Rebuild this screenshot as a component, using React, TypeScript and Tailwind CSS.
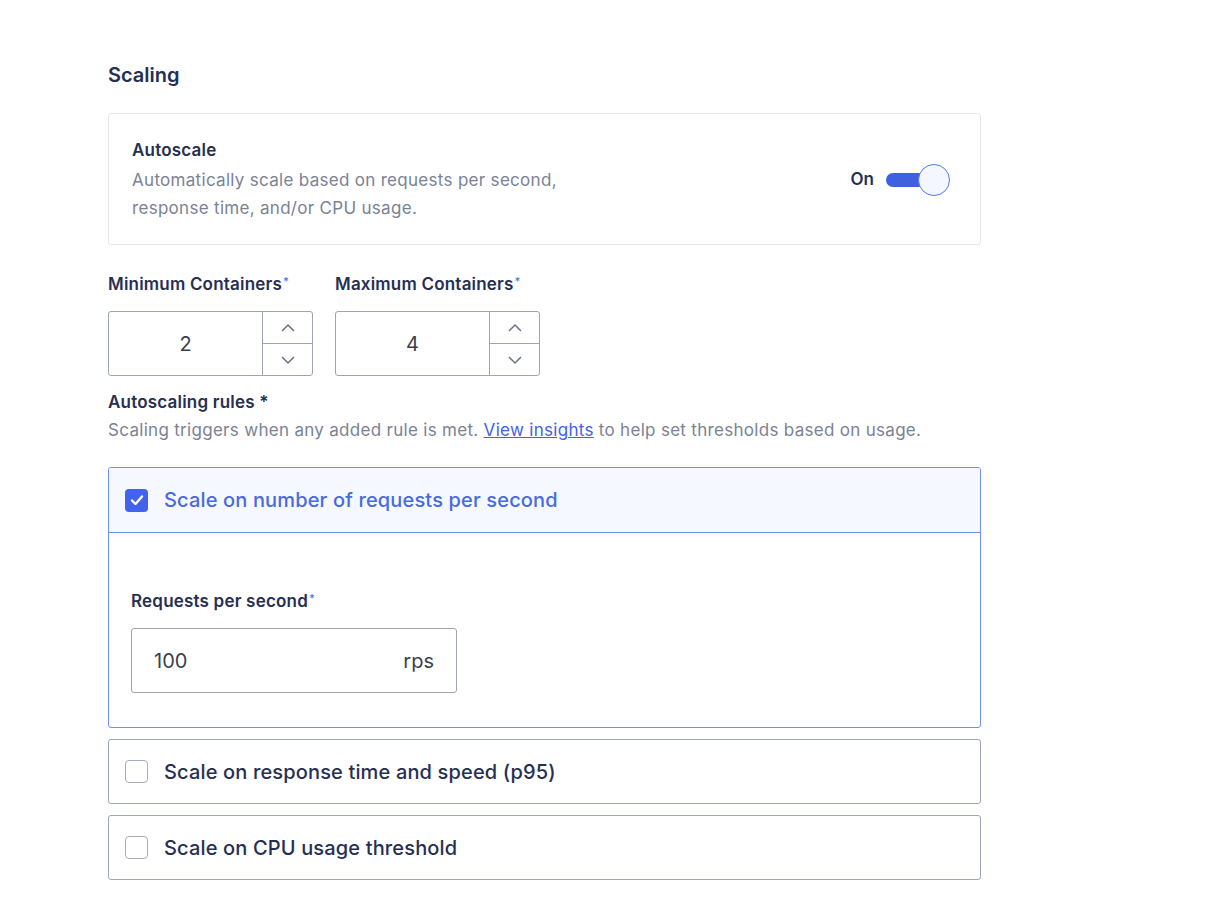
import React from "react";

const font = { fontFamily: "Inter, 'Open Sans', sans-serif" };

function Stepper({ value }: { value: string }) {
  return (
    <div className="flex h-[65px] w-[205px] rounded-[3px] border border-[#9ea4b3] bg-white">
      <div className="flex flex-1 items-center justify-center text-[20px] text-[#3a3f4c]">{value}</div>
      <div className="flex w-[50px] flex-col border-l border-[#9ea4b3]">
        <div className="flex flex-1 items-center justify-center border-b border-[#9ea4b3]">
          <svg width="16" height="10" viewBox="0 0 16 10" fill="none" stroke="#6b7283" strokeWidth="1.5">
            <path d="M2 8 L8 2 L14 8" />
          </svg>
        </div>
        <div className="flex flex-1 items-center justify-center">
          <svg width="16" height="10" viewBox="0 0 16 10" fill="none" stroke="#6b7283" strokeWidth="1.5">
            <path d="M2 2 L8 8 L14 2" />
          </svg>
        </div>
      </div>
    </div>
  );
}

function Star() {
  return <span className="relative -top-[5px] ml-[1px] text-[11px] text-[#5b7be8]">*</span>;
}

function Checkbox({ checked }: { checked?: boolean }) {
  if (checked) {
    return (
      <div className="flex h-[23px] w-[23px] items-center justify-center rounded-[4px] bg-[#4263eb]">
        <svg width="14" height="12" viewBox="0 0 14 12" fill="none" stroke="white" strokeWidth="2.4" strokeLinecap="round" strokeLinejoin="round">
          <path d="M2 6.5 L5.5 10 L12 2.5" />
        </svg>
      </div>
    );
  }
  return <div className="h-[23px] w-[23px] rounded-[4px] border-[1.5px] border-[#a7adba] bg-white" />;
}

const label = "text-[17px] font-semibold leading-[22px] tracking-[0.2px] text-[#262f52]";
const body = "text-[17px] tracking-[0.3px] text-[#7a8296]";
const rule = "text-[20px] font-medium tracking-[0.15px]";

export default function App() {
  return (
    <div className="min-h-[922px] bg-white" style={font}>
      <div className="ml-[108px] w-[873px] pt-[62px]">
        <div className="text-[20px] font-semibold leading-[26px] text-[#262f52]">Scaling</div>

        <div className="mt-[25px] flex h-[132px] items-center justify-between rounded-[3px] border border-[#e4e7ee] pl-[23px] pr-[30px] pt-[2px]">
          <div>
            <div className={label}>Autoscale</div>
            <div className={`mt-[5px] leading-[28px] ${body}`}>
              Automatically scale based on requests per second,
              <br />
              response time, and/or CPU usage.
            </div>
          </div>
          <div className="flex items-center gap-[12px]">
            <span className="text-[17px] font-semibold text-[#262f52]">On</span>
            <div className="relative h-[32px] w-[64px]">
              <div className="absolute left-0 top-[9px] h-[14px] w-[50px] rounded-full bg-[#3f60e0]" />
              <div className="absolute right-0 top-0 h-[32px] w-[32px] rounded-full border-[1.5px] border-[#5577ea] bg-[#f4f7ff]" />
            </div>
          </div>
        </div>

        <div className="mt-[28px] flex gap-[22px]">
          <div>
            <div className={label}>
              Minimum Containers<Star />
            </div>
            <div className="mt-[14px]">
              <Stepper value="2" />
            </div>
          </div>
          <div>
            <div className={label}>
              Maximum Containers<Star />
            </div>
            <div className="mt-[14px]">
              <Stepper value="4" />
            </div>
          </div>
        </div>

        <div className={`mt-[15px] ${label}`}>Autoscaling rules *</div>
        <div className={`mt-[6px] leading-[22px] ${body}`}>
          Scaling triggers when any added rule is met.{" "}
          <span className="text-[#3f62e8] underline">View insights</span> to help set thresholds based on usage.
        </div>

        <div className="mt-[26px] overflow-hidden rounded-[3px] border-[1.5px] border-[#7090f0]">
          <div className="flex h-[65px] items-center gap-[16px] border-b-[1.5px] border-[#7090f0] bg-[#f5f8ff] pl-[16px]">
            <Checkbox checked />
            <span className={`${rule} text-[#4a69e2]`}>Scale on number of requests per second</span>
          </div>
          <div className="pb-[34px] pl-[22px] pt-[57px]">
            <div className={label}>
              Requests per second<Star />
            </div>
            <div className="mt-[14px] flex h-[65px] w-[326px] items-center justify-between rounded-[3px] border border-[#9ea4b3] px-[22px] text-[20px] text-[#3a3f4c]">
              <span>100</span>
              <span>rps</span>
            </div>
          </div>
        </div>

        <div className="mt-[11px] flex h-[65px] items-center gap-[16px] rounded-[3px] border-[1.5px] border-[#a0a6b6] pl-[16px]">
          <Checkbox />
          <span className={`${rule} text-[#262f52]`}>Scale on response time and speed (p95)</span>
        </div>
        <div className="mt-[11px] flex h-[65px] items-center gap-[16px] rounded-[3px] border-[1.5px] border-[#a0a6b6] pl-[16px]">
          <Checkbox />
          <span className={`${rule} text-[#262f52]`}>Scale on CPU usage threshold</span>
        </div>
      </div>
    </div>
  );
}
